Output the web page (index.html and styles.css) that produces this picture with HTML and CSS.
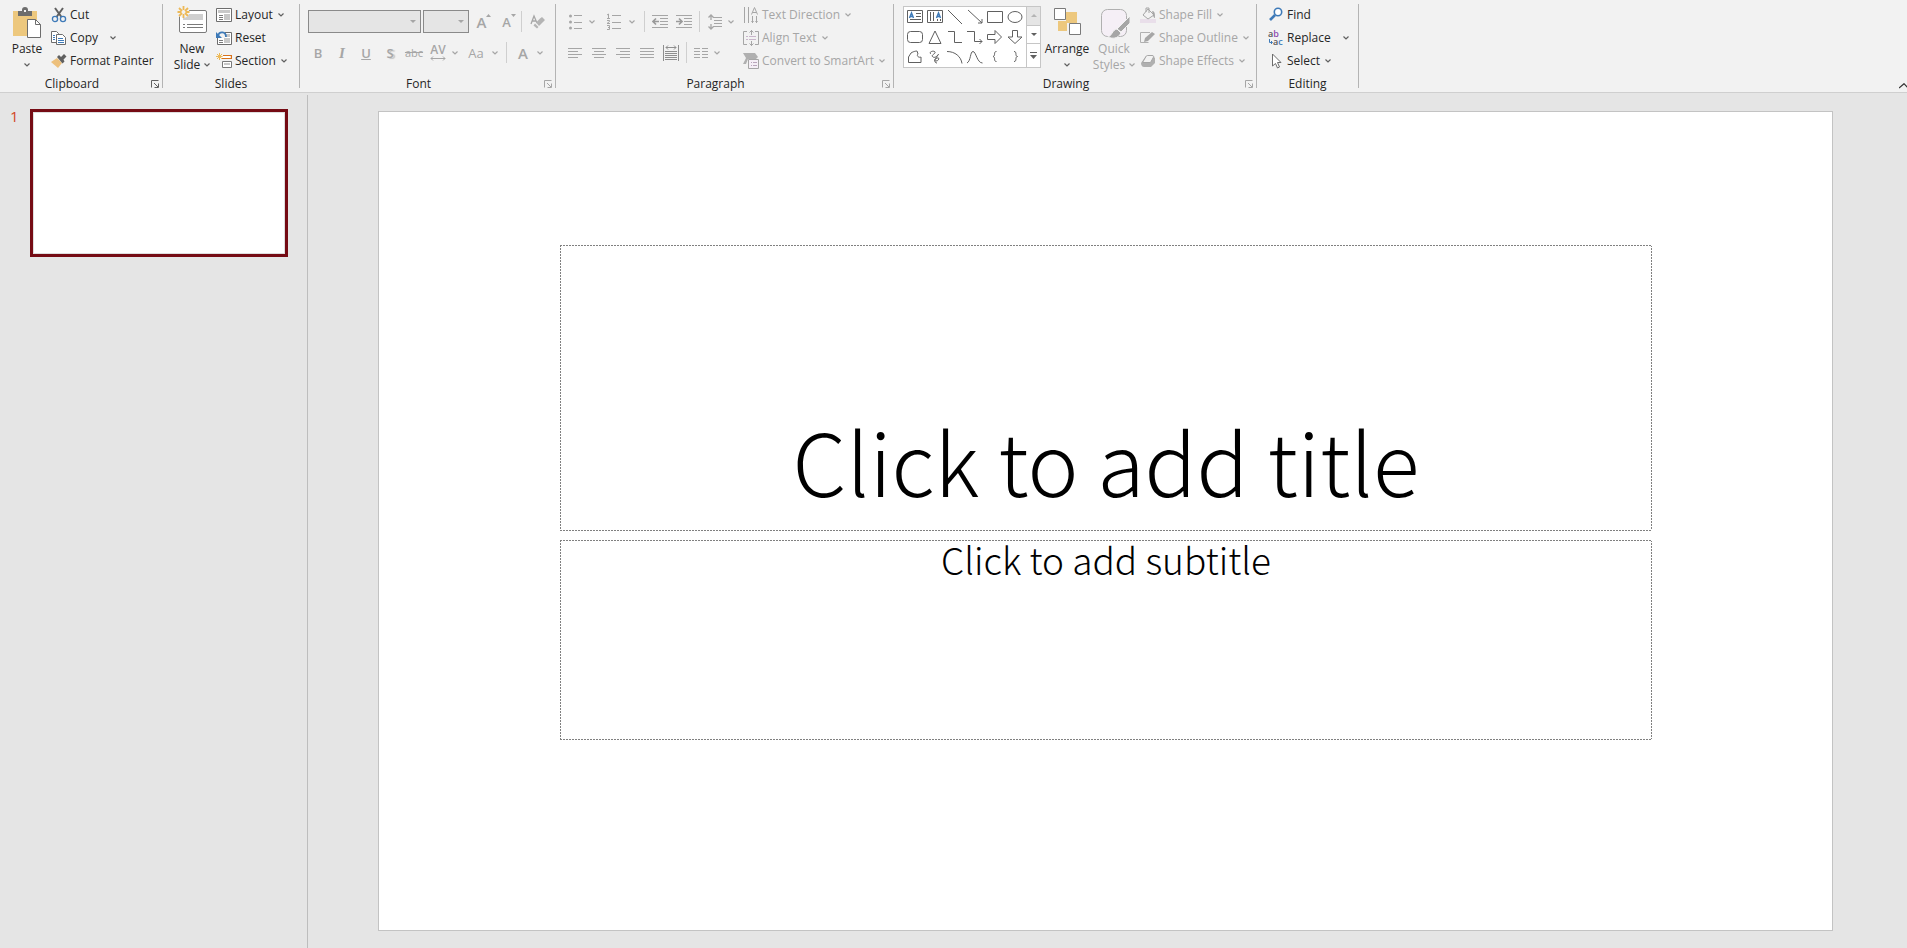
FILE: index.html
```html
<!DOCTYPE html>
<html lang="en">
<head>
<meta charset="utf-8">
<title>Presentation editor</title>
<link rel="stylesheet" href="styles.css">
</head>
<body>
<svg class="sprite" aria-hidden="true">
  <symbol id="chev" viewBox="0 0 6 4"><path d="M.5.5 3 3 5.5.5" fill="none" stroke="currentColor" stroke-width="1.2"/></symbol>
  <symbol id="launch" viewBox="0 0 8 8"><path d="M.5 7.5V.5H7.500M3 3l4 4M7.500 3.500v4h-4" fill="none" stroke="currentColor"/></symbol>
</svg>

<header class="ribbon">
  <section class="group clipboard" aria-label="Clipboard">
    <div class="body">
      <button class="big paste">
        <svg width="28" height="30" viewBox="0 0 28 30"><path fill="#edc87e" d="M0 3h24v25H0z"/><path fill="#6d6d6d" d="M5 8V3h4V2a3 3 0 0 1 6 0v1h4v5z"/><path fill="#f2f2f2" d="M11 2h2v2h-2z"/><path fill="#fff" stroke="#6d6d6d" d="M14.500 11.500h8l5 5v13h-13z"/><path fill="none" stroke="#6d6d6d" d="M22.500 11.500v5h5"/></svg>
        <span class="line">Paste</span>
        <span class="line"><svg class="chev"><use href="#chev"/></svg></span>
      </button>
      <div class="rows">
        <button class="row"><svg width="16" height="16" viewBox="0 0 16 16"><path d="M4 1l6.500 9M12 1 5.500 10" stroke="#606060" stroke-width="2" fill="none"/><circle cx="4" cy="12" r="2.600" fill="none" stroke="#3e7ab8" stroke-width="1.300"/><circle cx="12" cy="12" r="2.600" fill="none" stroke="#3e7ab8" stroke-width="1.300"/></svg><span>Cut</span></button>
        <button class="row split"><svg width="16" height="16" viewBox="0 0 16 16"><path fill="#fff" stroke="#6d6d6d" d="M.5 1.500h5l2 2v9h-7z"/><path fill="#fff" stroke="#6d6d6d" d="M5.500 4.500h6l3 3v7h-9z"/><path stroke="#3e7ab8" d="M2 5.500h2M2 7.500h2M2 9.500h2M7 8.500h5M7 10.500h6M7 12.500h6"/></svg><span>Copy</span><svg class="chev"><use href="#chev"/></svg></button>
        <button class="row"><svg width="16" height="16" viewBox="0 0 16 16"><path fill="#edc07c" d="M0 9l6-4 5 5-4 5z"/><path fill="#606060" d="M6 4l2-2 2 2 3-3 2.500 2.500-3 3 1 2-2 2z"/></svg><span>Format Painter</span></button>
      </div>
    </div>
    <footer class="caption"><span>Clipboard</span><button class="launcher" aria-label="Clipboard options"><svg width="8" height="8"><use href="#launch"/></svg></button></footer>
  </section>
  <i class="sep"></i>

  <section class="group slides" aria-label="Slides">
    <div class="body">
      <button class="big">
        <svg width="32" height="30" viewBox="0 0 32 30"><rect x="3.500" y="2.500" width="27" height="22" rx="1.500" fill="#fff" stroke="#7a7a7a"/><path fill="#cfcfcf" d="M7 6h20v6H7z"/><path stroke="#7a7a7a" d="M7 16.500h2M11 16.500h16M7 19.500h2M11 19.500h16"/><circle cx="7.500" cy="4" r="6" fill="#f2f2f2"/><path stroke="#edb957" stroke-width="1.800" d="M7.500-2v4M7.500 6v4M1.500 4h4M9.500 4h4M3 0l3 3M9 5l3 3M12 0 9 3M6 5 3 8"/></svg>
        <span class="line">New</span>
        <span class="line">Slide <svg class="chev"><use href="#chev"/></svg></span>
      </button>
      <div class="rows">
        <button class="row"><svg width="16" height="16" viewBox="0 0 16 16"><path fill="#fff" stroke="#6d6d6d" d="M.5 1.500h15v13H.5z"/><path fill="#c8c8c8" d="M2 3h12v3H2zM8 7h6v6H8z"/><path stroke="#7a7a7a" d="M3 8.500h4M3 10.500h4M3 12.500h4"/></svg><span>Layout</span><svg class="chev"><use href="#chev"/></svg></button>
        <button class="row"><svg width="16" height="16" viewBox="0 0 16 16"><path fill="#fff" stroke="#6d6d6d" d="M1.500 2.500h14v12h-14z"/><path fill="#c8c8c8" d="M9 4h5v3H9zM8 8h6v5H8z"/><path stroke="#7a7a7a" d="M3 10.500h4M3 12.500h4"/><path fill="#f2f2f2" d="M0 0h9v8H0z"/><path d="M2 6c1-5 8-5 8 1" fill="none" stroke="#3e7ab8" stroke-width="1.800"/><path fill="#3e7ab8" d="M0 2v6h6z"/></svg><span>Reset</span></button>
        <button class="row"><svg width="16" height="16" viewBox="0 0 16 16"><path stroke="#edb957" d="M3.500 0v7M0 3.500h7M1 1l5 5M6 1 1 6"/><path fill="#fff" stroke="#d8721c" stroke-width="1.200" d="M7 2.500h8.400v3H6"/><path fill="#fff" stroke="#7a7a7a" d="M6.500 8.500h9v6h-9z"/><path fill="#c8c8c8" d="M8 10h6v2H8z"/></svg><span>Section</span><svg class="chev"><use href="#chev"/></svg></button>
      </div>
    </div>
    <footer class="caption"><span>Slides</span></footer>
  </section>
  <i class="sep"></i>

  <section class="group font" aria-label="Font">
    <div class="body tools off">
      <div class="tool-row font-top">
        <label class="combo"><select aria-label="Font name" disabled><option></option></select><svg width="6" height="3"><path d="M0 0h6L3 3z"/></svg></label>
        <label class="combo"><select aria-label="Font size" disabled><option></option></select><svg width="6" height="3"><path d="M0 0h6L3 3z"/></svg></label>
        <button disabled class="glyph" aria-label="Increase font size"><b class="big-a">A</b><svg class="mark" width="5" height="3"><path d="M0 3h5L2.500 0z"/></svg></button>
        <button disabled class="glyph" aria-label="Decrease font size"><b>A</b><svg class="mark" width="5" height="3"><path d="M0 0h5L2.500 3z"/></svg></button>
        <i class="bar"></i>
        <button disabled aria-label="Clear formatting"><svg width="16" height="16" viewBox="0 0 16 16"><path d="M1 10 4 2l3 7M2 7h4" fill="none" stroke="#a6a6a6" stroke-width="1.300"/><path fill="#b4b4b4" d="M10 4.500 12 3l3 3-6 6-3-3.500zM5 9.500l3.500 3.500-1.500 1.500-3.500-3z"/></svg></button>
      </div>
      <div class="tool-row font-bottom">
        <button disabled class="glyph"><b>B</b></button>
        <button disabled class="glyph serif"><i>I</i></button>
        <button disabled class="glyph"><u>U</u></button>
        <button disabled class="glyph shadow"><b>S</b></button>
        <button disabled class="glyph small"><s>abc</s></button>
        <button disabled class="glyph spacing"><span>AV</span><svg width="16" height="5" viewBox="0 0 16 5"><path d="M1 2.500h14M3 .5l-2 2 2 2M13 .5l2 2-2 2" fill="none" stroke="#a6a6a6"/></svg></button>
        <button disabled aria-label="Spacing options"><svg class="chev"><use href="#chev"/></svg></button>
        <button disabled class="glyph case"><span>Aa</span></button>
        <button disabled aria-label="Case options"><svg class="chev"><use href="#chev"/></svg></button>
        <i class="bar"></i>
        <button disabled class="glyph"><b class="big-a">A</b></button>
        <button disabled aria-label="Font colour options"><svg class="chev"><use href="#chev"/></svg></button>
      </div>
    </div>
    <footer class="caption"><span>Font</span><button class="launcher off" aria-label="Font options"><svg width="8" height="8"><use href="#launch"/></svg></button></footer>
  </section>
  <i class="sep"></i>

  <section class="group paragraph off" aria-label="Paragraph">
    <div class="body">
      <div class="tools">
        <div class="tool-row para-top">
          <button disabled aria-label="Bullets"><svg width="16" height="16" viewBox="0 0 16 16"><circle cx="2.500" cy="2" r="1.500"/><circle cx="2.500" cy="8" r="1.500"/><circle cx="2.500" cy="14" r="1.500"/><path stroke="#a6a6a6" d="M6 1.500h8M6 8.500h8M6 14.500h8"/></svg></button>
          <button disabled class="start" aria-label="Bullet options"><svg class="chev"><use href="#chev"/></svg></button>
          <button disabled aria-label="Numbering"><svg width="16" height="18" viewBox="0 0 16 18"><path fill="none" stroke="#a6a6a6" d="M1 2l1.500-1v4M1 5.500h3M1 7.500h2.500v1L1 10.500h3M1 12.500h2.500v4H1M2 14.500h1.500M6 2.500h9M6 9.500h9M6 15.500h9"/></svg></button>
          <button disabled aria-label="Numbering options"><svg class="chev"><use href="#chev"/></svg></button>
          <i class="bar"></i>
          <button disabled aria-label="Decrease indent"><svg width="16" height="14" viewBox="0 0 16 14"><path fill="none" stroke="#a6a6a6" d="M0 .5h16M8 3.500h8M8 6.500h8M8 9.500h8M0 12.500h16"/><path fill="none" stroke="#9a9a9a" stroke-width="1.700" d="M7 6.500H1M4 3.500l-3 3 3 3"/></svg></button>
          <button disabled aria-label="Increase indent"><svg width="16" height="14" viewBox="0 0 16 14"><path fill="none" stroke="#a6a6a6" d="M0 .5h16M8 3.500h8M8 6.500h8M8 9.500h8M0 12.500h16"/><path fill="none" stroke="#9a9a9a" stroke-width="1.700" d="M0 6.500h6M3 3.500l3 3-3 3"/></svg></button>
          <i class="bar"></i>
          <button disabled aria-label="Line spacing"><svg width="14" height="16" viewBox="0 0 14 16"><path fill="none" stroke="#a6a6a6" stroke-width="1.300" d="M3 1v5M3 10v5M.5 3.500 3 1l2.500 2.500M.5 12.500 3 15l2.500-2.500"/><path stroke="#a6a6a6" d="M5 3.500h9M6 6.500h8M6 9.500h8M5 12.500h9"/></svg></button>
          <button disabled aria-label="Line spacing options"><svg class="chev"><use href="#chev"/></svg></button>
        </div>
        <div class="tool-row para-bottom">
          <button disabled aria-label="Align left"><svg width="14" height="10"><path stroke="#a6a6a6" d="M0 .5h14M0 3.500h10M0 6.500h14M0 9.500h10"/></svg></button>
          <button disabled aria-label="Center"><svg width="14" height="10"><path stroke="#a6a6a6" d="M0 .5h14M2 3.500h10M0 6.500h14M2 9.500h10"/></svg></button>
          <button disabled aria-label="Align right"><svg width="14" height="10"><path stroke="#a6a6a6" d="M0 .5h14M4 3.500h10M0 6.500h14M4 9.500h10"/></svg></button>
          <button disabled aria-label="Justify"><svg width="14" height="10"><path stroke="#a6a6a6" d="M0 .5h14M0 3.500h14M0 6.500h14M0 9.500h14"/></svg></button>
          <button disabled aria-label="Distribute"><svg width="16" height="16" viewBox="0 0 16 16"><path fill="none" stroke="#8e8e8e" d="M.5 0v16M15.500 0v16M3 2.500h10M5 .5l-2 2 2 2M11 .5l2 2-2 2M2 6.500h12M2 8.500h12M2 10.500h12M2 12.500h12M2 14.500h12"/></svg></button>
          <i class="bar"></i>
          <button disabled aria-label="Columns"><svg width="14" height="10"><path stroke="#a6a6a6" d="M0 .5h6M8 .5h6M0 3.500h6M8 3.500h6M0 6.500h6M8 6.500h6M0 9.500h6M8 9.500h6"/></svg></button>
          <button disabled aria-label="Column options"><svg class="chev"><use href="#chev"/></svg></button>
        </div>
      </div>
      <div class="rows">
        <button class="row" disabled><svg width="16" height="16" viewBox="0 0 16 16"><path fill="none" stroke="#a6a6a6" d="M1.500 0v16M5.500 0v16M9.500 9v7M13.500 9v7M8.500 7.500 11.500.5l3 7M9.500 5.500h4M8.500 14l1 1.500 1-1.500M12.500 14l1 1.500 1-1.500"/></svg><span>Text Direction</span><svg class="chev"><use href="#chev"/></svg></button>
        <button class="row" disabled><svg width="16" height="16" viewBox="0 0 16 16"><path fill="none" stroke="#a6a6a6" d="M4 1.500H.5v13H4M12 1.500h3.500v13H12M8.500 0v5M6.500 2.500l2-2 2 2M8.500 11v5M6.500 13.500l2 2 2-2"/><path stroke="#c9b6cb" d="M3 6.500h2M6 6.500h7M3 9.500h2M6 9.500h7"/></svg><span>Align Text</span><svg class="chev"><use href="#chev"/></svg></button>
        <button class="row" disabled><svg width="16" height="16" viewBox="0 0 16 16"><path fill="#b0b0b0" d="M0 0h12l3 4-2 2H5l-2 5H0l3-6z"/><path fill="#f5eff6" stroke="#a6a6a6" d="M5.500 6.500h10v9h-10z"/><path stroke="#b9a6bb" d="M8 9.500h1M10 9.500h4M8 12.500h1M10 12.500h4"/></svg><span>Convert to SmartArt</span><svg class="chev"><use href="#chev"/></svg></button>
      </div>
    </div>
    <footer class="caption"><span>Paragraph</span><button class="launcher" aria-label="Paragraph options"><svg width="8" height="8"><use href="#launch"/></svg></button></footer>
  </section>
  <i class="sep"></i>

  <section class="group drawing" aria-label="Drawing">
    <div class="body">
      <div class="gallery">
        <div class="shapes">
          <button aria-label="Text box"><svg width="16" height="14" viewBox="0 0 16 14"><path d="M.5.5h15v12H.5zM9 3.500h5M9 6.500h5M3 9.500h11"/><path class="blue" d="M2.500 8 4.500 3l2 5M3 6.500h3"/></svg></button>
          <button aria-label="Vertical text box"><svg width="16" height="14" viewBox="0 0 16 14"><path d="M.5.5h15v12H.5zM3.500 2v9M6.500 2v9M10.500 9v2M13.500 9v2"/><path class="blue" d="M9.500 8 11.500 3l2 5M10 6.500h3"/></svg></button>
          <button aria-label="Line"><svg width="16" height="14" viewBox="0 0 16 14"><path d="M1 0l14 14"/></svg></button>
          <button aria-label="Arrow"><svg width="16" height="14" viewBox="0 0 16 14"><path d="M1 0l14 13M15 9v4h-4"/></svg></button>
          <button aria-label="Rectangle"><svg width="16" height="14" viewBox="0 0 16 14"><path d="M.5 1.500h15v11H.5z"/></svg></button>
          <button aria-label="Ellipse"><svg width="16" height="14" viewBox="0 0 16 14"><ellipse cx="8" cy="7" rx="7" ry="5.500"/></svg></button>
          <button aria-label="Rounded rectangle"><svg width="16" height="14" viewBox="0 0 16 14"><rect x=".5" y="1.500" width="15" height="11" rx="3"/></svg></button>
          <button aria-label="Triangle"><svg width="16" height="14" viewBox="0 0 16 14"><path d="M8 1l6 12.500H2z"/></svg></button>
          <button aria-label="Elbow"><svg width="16" height="14" viewBox="0 0 16 14"><path d="M1 1.500h6.500v11H15"/></svg></button>
          <button aria-label="Elbow arrow"><svg width="16" height="14" viewBox="0 0 16 14"><path d="M0 1.500h7.500v10H15M12.500 9l2.500 2.500-2.500 2.500"/></svg></button>
          <button aria-label="Right arrow"><svg width="16" height="14" viewBox="0 0 16 14"><path d="M.5 4.500H8V.5l6.500 6.500L8 13.500v-4H.5z"/></svg></button>
          <button aria-label="Down arrow"><svg width="16" height="14" viewBox="0 0 16 14"><path d="M5.500.5h5V7H15l-7 6.500L1 7h4.500z"/></svg></button>
          <button aria-label="Freeform shape"><svg width="16" height="14" viewBox="0 0 16 14"><path d="M4 3c3-2 6-2 6-2l1 3c-2 2 1 4 3 3v5.500H1.500V7z"/></svg></button>
          <button aria-label="Scribble"><svg width="16" height="14" viewBox="0 0 16 14"><path d="M4 4c-3-2 3-4 4-2s-5 3-2 5 7-5 5-2-5 6-2 6 4-4 1-3-3 5 0 5"/></svg></button>
          <button aria-label="Arc"><svg width="16" height="14" viewBox="0 0 16 14"><path d="M0 1.500c8 0 14 5 15 12"/></svg></button>
          <button aria-label="Curve"><svg width="16" height="14" viewBox="0 0 16 14"><path d="M0 13C4 11 3 1.500 6 1.500S10 13 15.500 13"/></svg></button>
          <button aria-label="Left brace"><svg width="16" height="14" viewBox="0 0 16 14"><path d="M9.500 1.500C6 1.500 9 6 6 6.500c3 .5 0 5 3.500 5"/></svg></button>
          <button aria-label="Right brace"><svg width="16" height="14" viewBox="0 0 16 14"><path d="M7 1.500c3.500 0 .5 4.500 3.500 5-3 .5 0 5-3.500 5"/></svg></button>
        </div>
        <div class="scroller">
          <button class="up" disabled aria-label="Scroll up"><svg width="6" height="3"><path d="M0 3h6L3 0z"/></svg></button>
          <button aria-label="Scroll down"><svg width="6" height="3"><path d="M0 0h6L3 3z"/></svg></button>
          <button aria-label="More shapes"><svg width="7" height="8"><path d="M0 0h7v1H0zM0 3h7L3.500 7z"/></svg></button>
        </div>
      </div>
      <button class="big">
        <svg width="28" height="30" viewBox="0 0 28 30"><path fill="#edc87e" d="M13 4h11v11h-10v8H5V13h8z"/><path fill="#fff" stroke="#7a7a7a" d="M1.500.5h11v11h-11zM16.500 15.500h11v11h-11z"/></svg>
        <span class="line">Arrange</span>
        <span class="line"><svg class="chev"><use href="#chev"/></svg></span>
      </button>
      <button class="big off" disabled>
        <svg width="32" height="30" viewBox="0 0 32 30"><rect x="3.500" y="1.500" width="25" height="27" rx="6" fill="#f5eff6" stroke="#b0b0b0"/><path fill="#a6a6a6" stroke="#f2f2f2" d="M32 8v7l-9 9-4-3zM19 21l4 4c-3 6-9 6-13 4 4-1 4-7 9-8z"/></svg>
        <span class="line">Quick</span>
        <span class="line">Styles <svg class="chev"><use href="#chev"/></svg></span>
      </button>
      <div class="rows off">
        <button class="row" disabled><svg width="16" height="16" viewBox="0 0 16 16"><path fill="#e9dfea" d="M0 12h16v4H0z"/><path fill="#f2f2f2" stroke="#a6a6a6" d="M8 2l6 6-6 4-5-4zM6 5V1h3v5"/><path fill="#a6a6a6" d="M12 4c3 0 3 3 3 7-2 0-2-4-3-7z"/></svg><span>Shape Fill</span><svg class="chev"><use href="#chev"/></svg></button>
        <button class="row" disabled><svg width="16" height="16" viewBox="0 0 16 16"><path fill="none" stroke="#b0b0b0" d="M10 2.500H.5v10h8"/><path fill="#a6a6a6" d="M4 12l1-4 7-6 3 2-7 7z"/></svg><span>Shape Outline</span><svg class="chev"><use href="#chev"/></svg></button>
        <button class="row" disabled><svg width="16" height="16" viewBox="0 0 16 16"><path fill="#b0b0b0" d="M1 10l5-7h7l2 2v5l-4 4H4c-2 0-3-2-3-4z"/><path fill="#f2f2f2" stroke="#a6a6a6" d="M2.500 9.500 6 3.500c.5-1 1-1 2-1h4c2 0 2 1 1 2.500L10.500 9.500z"/></svg><span>Shape Effects</span><svg class="chev"><use href="#chev"/></svg></button>
      </div>
    </div>
    <footer class="caption"><span>Drawing</span><button class="launcher off" aria-label="Drawing options"><svg width="8" height="8"><use href="#launch"/></svg></button></footer>
  </section>
  <i class="sep"></i>

  <section class="group editing" aria-label="Editing">
    <div class="body">
      <div class="rows">
        <button class="row"><svg width="16" height="16" viewBox="0 0 16 16"><circle cx="10" cy="5" r="3.700" fill="#fff" stroke="#3e7ab8" stroke-width="1.600"/><path d="M7 8l-5 5" stroke="#3e7ab8" stroke-width="2.600"/></svg><span>Find</span></button>
        <button class="row split"><svg class="replace" width="16" height="16" viewBox="0 0 16 16"><text x="0" y="7" class="ab">a<tspan fill="#8f4bb0">b</tspan></text><text x="5" y="15" class="ab">a<tspan fill="#3e7ab8">c</tspan></text><path d="M1.500 9v3.500H4M3 11l1.500 1.500L3 14" fill="none" stroke="#3e7ab8"/></svg><span>Replace</span><svg class="chev"><use href="#chev"/></svg></button>
        <button class="row"><svg width="16" height="16" viewBox="0 0 16 16"><path fill="#fff" stroke="#6d6d6d" d="M4.500 1v12l3-2.500 2 4.500 2-1-2-4.500h3.500z"/></svg><span>Select</span><svg class="chev"><use href="#chev"/></svg></button>
      </div>
    </div>
    <footer class="caption"><span>Editing</span></footer>
  </section>
  <i class="sep"></i>
  <button class="collapse" aria-label="Collapse ribbon"><svg width="8" height="6"><path d="M0 5 5 .7 9 5" fill="none" stroke="#333" stroke-width="1.200"/></svg></button>
</header>

<main class="workspace">
  <nav class="thumbs" aria-label="Slides">
    <span class="number">1</span>
    <button class="thumb" aria-label="Slide 1"></button>
  </nav>
  <section class="stage">
    <article class="slide">
      <h1 class="placeholder title">Click to add title</h1>
      <p class="placeholder subtitle">Click to add subtitle</p>
    </article>
  </section>
</main>
</body>
</html>
```

FILE: styles.css
```css
* { box-sizing: border-box; }

body {
  margin: 0;
  height: 100vh;
  display: flex;
  flex-direction: column;
  overflow: hidden;
  background: #e5e5e5;
  color: #262626;
  font: 12px/16px "Open Sans", "Noto Sans", sans-serif;
}

button {
  margin: 0;
  padding: 0;
  border: 0;
  background: none;
  color: inherit;
  font: inherit;
}

svg { flex: none; display: block; }
.sprite { width: 0; height: 0; position: absolute; }
.chev { width: 6px; height: 4px; color: #606060; }
.off, .off .chev { color: #a6a6a6; }

/* Ribbon */
.ribbon {
  flex: none;
  display: flex;
  height: 93px;
  background: #f2f2f2;
  border-bottom: 1px solid #cfcfcf;
}
.sep { flex: none; width: 1px; margin: 4px 0; background: #b4b4b4; }

.group {
  flex: none;
  display: flex;
  flex-direction: column;
  gap: 4px;
  padding-top: 3px;
}
.clipboard { width: 162px; }
.slides { width: 136px; }
.font { width: 255px; }
.paragraph { width: 337px; }
.drawing { width: 362px; }
.editing { width: 101px; }

.body { display: flex; height: 69px; }
.clipboard .body { padding-left: 13px; gap: 10px; }
.slides .body { padding-left: 9px; gap: 4px; }
.font .body { padding-left: 6px; }
.paragraph .body { padding-left: 7px; }
.drawing .body { padding-left: 9px; gap: 5px; }
.editing .body { padding-left: 11px; }

.caption { display: flex; align-items: center; height: 16px; color: #262626; }
.caption span { flex: 1; text-align: center; }
.launcher { width: 18px; padding-left: 7px; color: #606060; }
.off .launcher, .launcher.off { color: #a6a6a6; }

.big {
  display: flex;
  flex-direction: column;
  align-items: center;
  width: 40px;
  padding-top: 5px;
}
.paste { width: 28px; }
.drawing .big { width: 42px; }
.big > svg { margin-bottom: 3px; overflow: visible; }
.line { display: flex; align-items: center; gap: 4px; height: 16px; white-space: nowrap; }

.rows { display: grid; grid-template-rows: repeat(3, 23px); justify-items: start; }
.row { display: flex; align-items: center; gap: 3px; white-space: nowrap; }
.row .chev { margin-left: 2px; }
.row.split .chev { margin-left: 9px; }
.replace { overflow: visible; }
.ab { font: 600 9px "Open Sans", sans-serif; fill: #555; }

/* Two-row tool blocks */
.tools { flex-direction: column; width: 180px; padding-top: 3px; }
.tool-row { display: grid; height: 31px; align-items: center; justify-items: center; }
.tool-row svg { fill: #a6a6a6; }
.tool-row button { display: flex; align-items: center; justify-content: center; }
.tool-row .start { justify-self: start; }
.bar { width: 1px; height: 21px; background: #cfcfcf; }
.font-top { grid-template-columns: 113px 46px 26px 20px 1px 28px; column-gap: 2px; padding-left: 2px; justify-content: start; }
.font-bottom { grid-template-columns: repeat(6, 24px) 10px 32px 6px 17px 16px 18px; justify-content: start; }
.para-top { grid-template-columns: 26px 14px 22px 14px 10px 22px 26px 4px 28px 4px; }
.para-top, .para-bottom { justify-content: start; }
.para-bottom { grid-template-columns: repeat(5, 24px) 6px 24px 8px; }

.combo { display: grid; width: 100%; align-items: center; }
.combo > * { grid-area: 1 / 1; }
.combo svg { justify-self: end; margin-right: 5px; }
.combo select {
  width: 100%;
  height: 23px;
  border: 1px solid #8a8a8a;
  border-radius: 0;
  background: #e5e5e5;
  opacity: 1;
  appearance: none;
}

.glyph { font-size: 13px; font-weight: 600; color: #a6a6a6; }
.glyph b { font-weight: 600; }
.big-a { font-size: 15px; }
.mark { align-self: start; }
.serif { font-family: "Liberation Serif", serif; font-size: 15px; }
.shadow { text-shadow: 2px 1px 1px #c4c4c4; }
.small { font-size: 11px; font-weight: 400; }
.case { font-weight: 400; }
.tool-row .spacing { flex-direction: column; font-size: 12px; line-height: 12px; }

/* Shape gallery */
.gallery { display: flex; width: 138px; height: 62px; margin-top: 3px; border: 1px solid #c6c6c6; background: #fff; }
.shapes { flex: 1; display: grid; grid-template-columns: repeat(6, 20px); grid-template-rows: repeat(3, 20px); padding-left: 1px; }
.shapes button { display: grid; place-items: center; }
.shapes svg { fill: none; stroke: #606060; overflow: visible; }
.shapes .blue { stroke: #3e7ab8; stroke-width: 1.5; }
.scroller { display: grid; width: 14px; border-left: 1px solid #c6c6c6; }
.scroller button { display: grid; place-items: center; fill: #606060; }
.scroller button + button { border-top: 1px solid #c6c6c6; }
.scroller .up { background: #e5e5e5; fill: #b4b4b4; }

.collapse { margin-left: auto; align-self: end; padding-bottom: 3px; }

/* Workspace */
.workspace { flex: 1; display: flex; min-height: 0; }
.thumbs {
  flex: none;
  display: flex;
  align-items: start;
  width: 308px;
  margin-top: 2px;
  padding: 14px 19px 0 10px;
  border-right: 1px solid #bdbdbd;
}
.number { width: 20px; color: #d24726; font-size: 15px; line-height: 14px; }
.thumb { flex: 1; height: 148px; border: 3px solid #750b14; background: #fff; box-shadow: inset 0 0 0 1px #dedede; }

.stage { flex: 1; display: flex; padding: 18px 74px 17px 70px; }
.slide {
  flex: 1;
  display: grid;
  grid-template-rows: 287fr 200fr;
  row-gap: 9px;
  padding: 133px 180px 190px 181px;
  border: 1px solid #c3c3c3;
  background: #fff;
}
.placeholder {
  --across: repeating-linear-gradient(to right, #808080 0 2px, #fff 2px 3px);
  --down: repeating-linear-gradient(to bottom, #808080 0 2px, #fff 2px 3px);
  margin: 0;
  padding: 1px;
  background:
    var(--across) top / 100% 1px no-repeat,
    var(--across) bottom / 100% 1px no-repeat,
    var(--down) left / 1px 100% no-repeat,
    var(--down) right / 1px 100% no-repeat;
  color: #000;
  font-family: "Noto Sans CJK JP", Roboto, sans-serif;
  font-weight: 300;
  text-align: center;
}
.title { display: flex; align-items: end; justify-content: center; padding-bottom: 15px; font-size: 86px; line-height: 112px; }
.subtitle { font-size: 37px; line-height: 36px; }
```
